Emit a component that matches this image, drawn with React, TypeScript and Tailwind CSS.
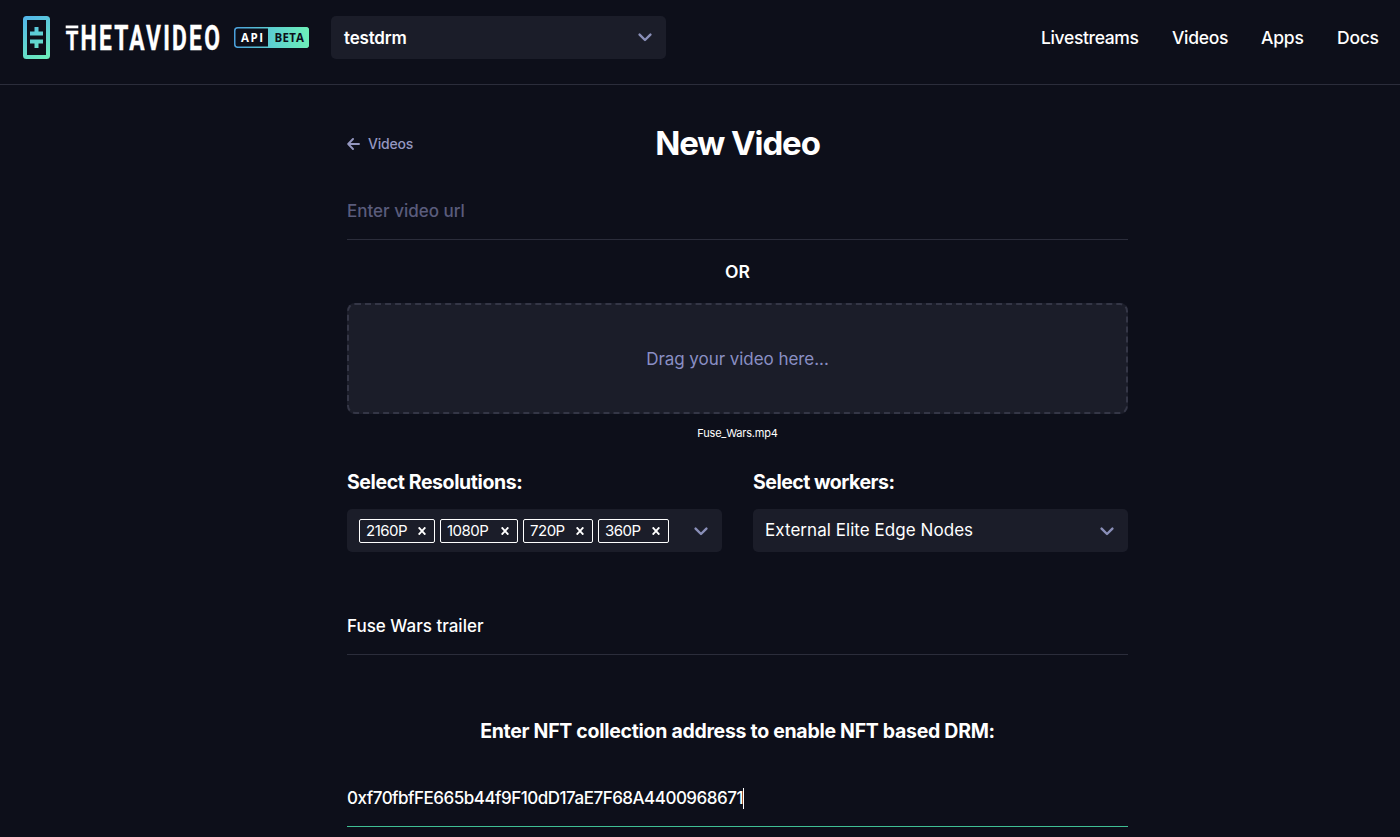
import React, { useState } from 'react';

const navLinks = [
  { label: 'Livestreams', className: 'w-[98px] tracking-[-0.35px]' },
  { label: 'Videos', className: 'w-[56px] tracking-[-0.3px]' },
  { label: 'Apps', className: 'w-[43px] tracking-[-0.2px]' },
  { label: 'Docs', className: 'w-[42px] tracking-[-0.25px]' },
];

const resolutions = [
  { label: '2160P', className: 'w-[76px]' },
  { label: '1080P', className: 'w-[78px]' },
  { label: '720P', className: 'w-[70px]' },
  { label: '360P', className: 'w-[71px]' },
];

const Chevron: React.FC = () => (
  <svg width="14" height="9" viewBox="0 0 14 9" fill="none" stroke="#8a8fb8" strokeWidth="2.4" strokeLinecap="round" strokeLinejoin="round">
    <path d="M1.6 1.6L7 7L12.4 1.6" />
  </svg>
);

const Logo: React.FC = () => (
  <svg width="290" height="43" viewBox="0 0 290 43" className="block">
    <defs>
      <linearGradient id="mark" gradientUnits="userSpaceOnUse" x1="0" y1="0" x2="27" y2="43">
        <stop offset="0" stopColor="#52b4ec" />
        <stop offset="1" stopColor="#6df0b8" />
      </linearGradient>
      <linearGradient id="badge" gradientUnits="userSpaceOnUse" x1="211" y1="0" x2="286" y2="0">
        <stop offset="0" stopColor="#4a9fdc" />
        <stop offset="0.5" stopColor="#5ccfd0" />
        <stop offset="1" stopColor="#6df0b8" />
      </linearGradient>
    </defs>
    <rect x="2" y="2" width="23" height="39" rx="1.5" fill="none" stroke="url(#mark)" strokeWidth="4" />
    <path d="M11.5 11h4v4.5h4.5v4h-13v-4h4.5zM7 23.5h13v4h-4.5v4.5h-4v-4.5h-4.5z" fill="url(#mark)" />
    <rect x="42.7" y="9.5" width="12.6" height="2.8" fill="#fff" />
    <text x="42.7" y="33.8" fill="#fff" stroke="#fff" strokeWidth="0.3" fontFamily="Roboto, sans-serif" fontWeight="700" fontSize="25" textLength="12.6" lengthAdjust="spacingAndGlyphs">T</text>
    <text transform="translate(57.6 33.8) scale(0.66 1)" fill="#fff" stroke="#fff" strokeWidth="0.4" fontFamily="Roboto, sans-serif" fontWeight="700" fontSize="34.5" textLength="211" lengthAdjust="spacing">HETAVIDEO</text>
    <rect x="211.75" y="11.75" width="73.5" height="19.5" rx="3" fill="none" stroke="url(#badge)" strokeWidth="1.5" />
    <path d="M245 11h38a3 3 0 0 1 3 3v15a3 3 0 0 1-3 3h-38z" fill="url(#badge)" />
    <text x="218" y="25.7" fill="#fff" fontFamily="Open Sans, sans-serif" fontWeight="700" fontSize="11.5" textLength="22">API</text>
    <text x="251.5" y="25.7" fill="#0d0f1a" fontFamily="Open Sans, sans-serif" fontWeight="700" fontSize="11.5" textLength="29.5">BETA</text>
  </svg>
);

const Header: React.FC = () => (
  <header className="flex h-[85px] items-start border-b border-[#2b2d3b] pt-4 pl-[23px] pr-[21px]">
    <Logo />
    <button className="ml-[18px] flex h-[43px] w-[335px] items-center justify-between rounded-[5px] bg-[#1b1d29] pl-[13px] pr-[14px] text-[17px] font-semibold tracking-[-0.2px] text-white">
      <span className="pt-0.5">testdrm</span>
      <Chevron />
    </button>
    <nav className="ml-auto flex h-[43px] items-center gap-[33px] pt-px text-[17.5px] font-medium text-white">
      {navLinks.map((link) => (
        <a key={link.label} href="#" className={`whitespace-nowrap ${link.className}`}>{link.label}</a>
      ))}
    </nav>
  </header>
);

const App: React.FC = () => {
  const [title, setTitle] = useState('Fuse Wars trailer');

  return (
    <div className="h-[837px] overflow-hidden bg-[#0d0f1a] font-[Inter,sans-serif] text-white">
      <Header />
      <main className="ml-[347px] w-[781px] pt-[34px]">
        <div className="grid h-12 grid-cols-[1fr_auto_1fr] items-center">
          <a href="#" className="flex items-center gap-2 text-[14px] font-medium tracking-[-0.2px] text-[#9497c0]">
            <svg width="13" height="12" viewBox="0 0 13 12" fill="none" stroke="currentColor" strokeWidth="1.9" strokeLinecap="round" strokeLinejoin="round">
              <path d="M12 6H1.5M6 1L1.2 6L6 11" />
            </svg>
            Videos
          </a>
          <h1 className="text-[33px] font-bold tracking-[-1.1px]">New Video</h1>
        </div>

        <input
          placeholder="Enter video url"
          className="mt-4 block h-[57px] w-full border-b border-[#2b2d3b] text-[17px] font-medium outline-none placeholder:text-[#5a5c7c]"
        />

        <div className="flex h-[63px] items-center justify-center pt-0.5 text-[17.5px] font-semibold">OR</div>

        <div className="flex h-[111px] items-center justify-center rounded-lg border-2 border-dashed border-[#343646] bg-[#1b1d29] pt-0.5 text-[17px] tracking-[-0.05px] text-[#8a8fc4]">
          Drag your video here...
        </div>
        <div className="flex h-[38px] items-center justify-center text-[11px] tracking-[-0.2px]">Fuse_Wars.mp4</div>

        <div className="grid grid-cols-2 gap-[31px]">
          <div>
            <h3 className="flex h-[57px] items-center pt-[5px] text-[19.5px] font-bold tracking-[-0.4px]">Select Resolutions:</h3>
            <div className="flex h-[43px] items-center justify-between rounded-[5px] bg-[#1b1d29] pl-3 pr-[14px]">
              <div className="flex gap-[5px]">
                {resolutions.map((item) => (
                  <span key={item.label} className={`flex h-6 items-center justify-between rounded-[2px] border border-white pl-1.5 pr-2 text-[15px] tracking-[-0.5px] ${item.className}`}>
                    <span className="pt-px">{item.label}</span>
                    <svg width="8" height="8" viewBox="0 0 8 8" stroke="#fff" strokeWidth="1.9">
                      <path d="M0.7 0.4L7.3 7.6M7.3 0.4L0.7 7.6" />
                    </svg>
                  </span>
                ))}
              </div>
              <span className="pt-0.5"><Chevron /></span>
            </div>
          </div>
          <div>
            <h3 className="flex h-[57px] items-center pt-[5px] text-[19.5px] font-bold tracking-[-0.5px]">Select workers:</h3>
            <div className="flex h-[43px] items-center justify-between rounded-[5px] bg-[#1b1d29] pl-3 pr-[14px] text-[17px] tracking-[0.05px]">
              External Elite Edge Nodes
              <span className="pt-0.5"><Chevron /></span>
            </div>
          </div>
        </div>

        <input
          value={title}
          onChange={(e) => setTitle(e.target.value)}
          className="mt-[46px] block h-[57px] w-full border-b border-[#2b2d3b] text-[17px] font-medium outline-none"
        />

        <h3 className="mt-12 flex h-14 items-center justify-center whitespace-nowrap pt-0.5 text-[19.5px] font-bold tracking-[-0.29px]">
          Enter NFT collection address to enable NFT based DRM:
        </h3>

        <div className="mt-[11px] flex h-[57px] items-center border-b border-[#3fbf94] pt-0.5 text-[17px] font-medium tracking-[-0.5px]">
          0xf70fbfFE665b44f9F10dD17aE7F68A4400968671
          <span className="-mt-0.5 h-[21px] w-px bg-white" />
        </div>
      </main>
    </div>
  );
};

export default App;
